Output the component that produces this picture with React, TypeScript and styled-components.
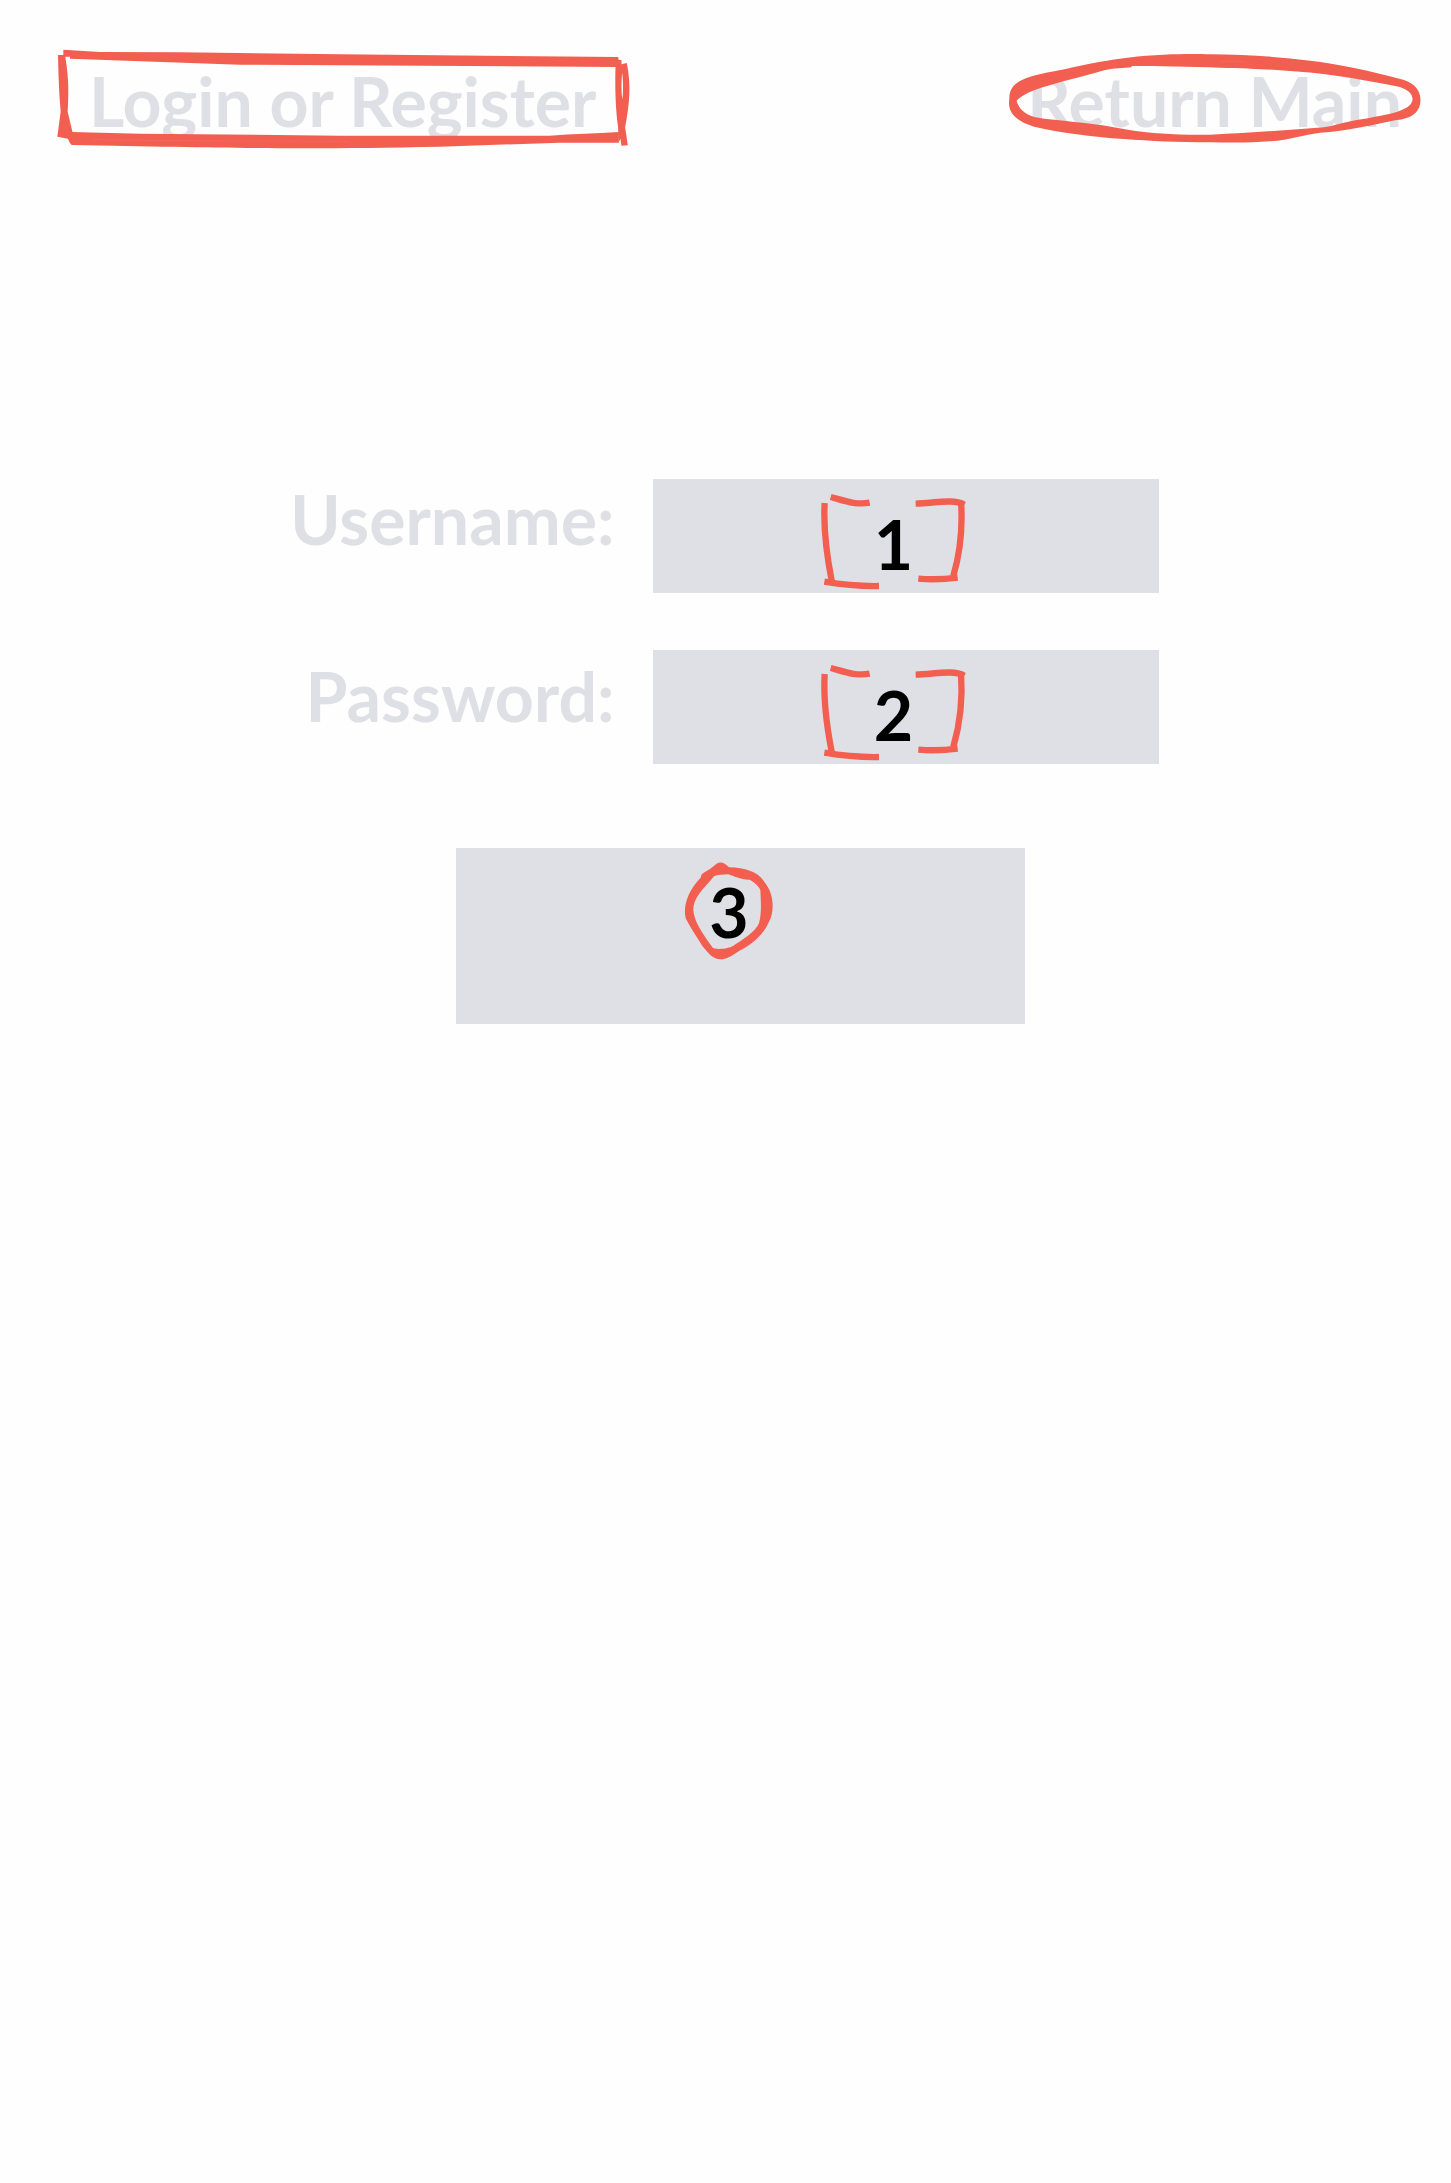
import React from 'react';
import styled, { createGlobalStyle, css } from 'styled-components';

const GREY = '#dfe0e5';
const RED = '#f25e50';

const GlobalStyle = createGlobalStyle`
  *, *::before, *::after { box-sizing: border-box; }
  body {
    margin: 0;
    background: #fefefe;
    font-family: Lato, 'Liberation Sans', sans-serif;
  }
`;

const type = css`
  font-family: inherit;
  font-size: 68px;
  font-weight: 700;
  line-height: 80px;
`;

const Page = styled.div`
  min-height: 100vh;
`;

const Header = styled.header`
  display: flex;
  flex-wrap: wrap;
  justify-content: space-between;
  padding: 50px 31px 0 57px;
`;

const Title = styled.h1`
  ${type}
  position: relative;
  margin: 0;
  padding: 11px 34px 7px 32px;
  color: ${GREY};
`;

const ReturnLink = styled.a`
  ${type}
  position: relative;
  padding: 11px 18px 7px;
  color: ${GREY};
  text-decoration: none;
`;

const Outline = styled.svg`
  position: absolute;
  inset: 0;
  width: 100%;
  height: 100%;
  overflow: visible;
  pointer-events: none;
  fill: ${RED};
`;

const Form = styled.form`
  max-width: 880px;
  margin: 331px auto 0;
  padding-right: 7px;
`;

const Fields = styled.div`
  display: flex;
  gap: 38px;
`;

const Labels = styled.div`
  display: flex;
  flex: 1;
  flex-direction: column;
  align-items: flex-end;
  gap: 97px;
`;

const Label = styled.label`
  ${type}
  color: ${GREY};
`;

const Inputs = styled.div`
  display: flex;
  flex: 0 1 506px;
  flex-direction: column;
  gap: 57px;
  min-width: 0;
`;

const Field = styled.div`
  position: relative;
`;

const Input = styled.input`
  ${type}
  display: block;
  width: 100%;
  height: 114px;
  padding: 24px 24px 10px 0;
  border: 0;
  border-radius: 0;
  background: ${GREY};
  color: #000;
  text-align: center;
`;

const Submit = styled.button`
  ${type}
  position: relative;
  display: block;
  width: 569px;
  max-width: 100%;
  margin: 84px 0 0 170px;
  padding: 24px 22px 72px 0;
  border: 0;
  background: ${GREY};
  color: #000;
  text-align: center;
`;

const Mark = styled.span`
  position: absolute;
  inset: 14px 24px auto 0;
  display: flex;
  justify-content: center;
  pointer-events: none;
`;

const MarkDrawing = styled.svg<{ $width: number }>`
  width: ${(p) => p.$width}px;
  height: 97px;
  overflow: visible;
`;

function BoxOutline() {
  return (
    <Outline viewBox="51 30 1722 294" preserveAspectRatio="none" aria-hidden="true">
      <path d="M70 29 L180 36 L420 37 L900 43 L1736 51 L1738 60 H1746 V74 L1738 81 L900 76 L600 74 L260 62 L90 56 V50 H70 Z" />
      <path d="M54 45 H75 C84 100 88 140 83 215 L98 278 V315 L90 310 L84 296 L52 290 L62 215 Q56 150 54 45 Z" />
      <path d="M96 276 L300 281 L900 287 H1530 C1600 281 1670 281 1738 276 V308 H1560 L1200 320 C800 328 600 325 95 315 L84 294 Z" />
      <path
        fillRule="evenodd"
        d="M1728 80 C1726 160 1730 220 1736 262 L1737 308 L1743 296 L1746 317 L1765 316 L1757 262 C1770 190 1776 140 1762 69 L1746 73 Z M1748 98 C1745 130 1746 160 1749 178 C1752 150 1751 120 1748 98 Z"
      />
      <path d="M160 299 L540 303 L930 304" fill="none" stroke="#f57b70" strokeWidth="1" />
    </Outline>
  );
}

function EllipseOutline() {
  return (
    <Outline viewBox="54 30 1236 294" preserveAspectRatio="none" aria-hidden="true">
      <path
        fillRule="evenodd"
        d="M55 175 C55 130 90 112 190 94 C270 78 370 50 520 44 C570 42 620 42 660 43 C760 43 860 50 960 62 C1040 71 1140 92 1240 119 C1275 130 1292 152 1292 180 C1292 212 1270 236 1220 240 C1150 254 1070 274 990 278 C940 284 900 300 840 304 C780 309 720 308 660 307 C560 307 480 303 400 297 C300 290 210 278 130 260 C80 245 54 222 54 190 Z
           M77 182 C110 145 210 128 335 92 C370 84 400 84 423 82 V78 C500 78 600 80 690 83 C820 86 900 92 1000 102 C1090 114 1160 127 1220 139 C1255 147 1268 162 1268 178 C1268 196 1245 210 1210 219 C1180 226 1140 234 1100 240 C1060 247 1030 258 1000 262 C900 270 780 278 660 284 C560 286 480 279 430 272 C370 262 320 252 250 246 C210 239 170 240 130 231 C100 222 82 204 77 182 Z"
      />
      <path d="M690 64 H765" fill="none" stroke="#f57b70" strokeWidth="1" />
    </Outline>
  );
}

function BracketMark() {
  return (
    <Mark>
      <MarkDrawing $width={146} viewBox="60 69 438 291" aria-hidden="true">
        <g fill="none" stroke={RED} strokeWidth="19">
          <path d="M71 99 C67 170 74 240 92 332" />
          <path d="M70 335 C130 345 180 349 234 348" />
          <path d="M89 81 C130 92 165 106 206 98" />
          <path d="M344 101 C400 100 455 85 490 104" />
          <path d="M480 94 C486 180 477 250 457 318" />
          <path d="M352 326 C400 330 430 328 470 323" />
        </g>
      </MarkDrawing>
    </Mark>
  );
}

function CircleMark() {
  return (
    <Mark>
      <MarkDrawing $width={88} viewBox="75 66 264 291" aria-hidden="true">
        <path
          fill={RED}
          fillRule="evenodd"
          d="M172 72 C182 64 196 66 210 82 C260 84 298 95 318 128 C348 165 345 220 330 245 C310 290 275 315 240 333 C215 350 200 358 186 358 C160 358 150 340 130 318 C110 285 95 265 80 235 C72 200 85 155 126 112 C124 102 140 95 152 88 Z
             M166 108 C130 150 102 175 103 210 C105 245 130 280 162 324 C180 330 210 325 222 318 C250 300 290 275 300 250 C308 220 306 190 304 150 C298 135 282 125 272 119 C245 120 225 108 208 103 C190 105 175 104 166 108 Z"
        />
      </MarkDrawing>
    </Mark>
  );
}

export default function App() {
  return (
    <Page>
      <GlobalStyle />
      <Header>
        <Title>
          Login or Register
          <BoxOutline />
        </Title>
        <ReturnLink href="#main">
          Return Main
          <EllipseOutline />
        </ReturnLink>
      </Header>
      <Form onSubmit={(e) => e.preventDefault()}>
        <Fields>
          <Labels>
            <Label htmlFor="username">Username:</Label>
            <Label htmlFor="password">Password:</Label>
          </Labels>
          <Inputs>
            <Field>
              <Input id="username" type="text" defaultValue="1" />
              <BracketMark />
            </Field>
            <Field>
              <Input id="password" type="text" defaultValue="2" />
              <BracketMark />
            </Field>
          </Inputs>
        </Fields>
        <Submit type="submit">
          3
          <CircleMark />
        </Submit>
      </Form>
    </Page>
  );
}
